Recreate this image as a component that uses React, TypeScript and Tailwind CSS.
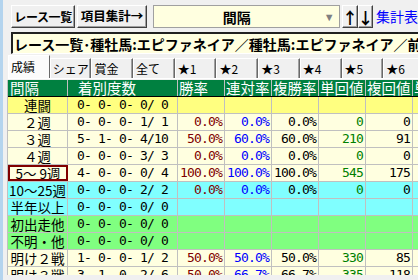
import React from 'react';

const jp = "font-['Noto_Sans_CJK_JP',sans-serif]";
const mono = "font-['DejaVu_Sans_Mono',monospace] text-[13px] tracking-[-0.83px] whitespace-pre";

type Row = {
  label: string;
  bg: string;
  rec: string;
  vals?: [string, string, string, string, string];
  sel?: boolean;
};

const rows: Row[] = [
  { label: '連闘', bg: 'bg-[#ffff80]', rec: '0- 0- 0- 0/ 0' },
  { label: '２週', bg: 'bg-[#ffffe0]', rec: '0- 0- 0- 1/ 1', vals: ['0.0%', '0.0%', '0.0%', '0', '0'] },
  { label: '３週', bg: 'bg-[#ffffe0]', rec: '5- 1- 0- 4/10', vals: ['50.0%', '60.0%', '60.0%', '210', '91'] },
  { label: '４週', bg: 'bg-[#ffffe0]', rec: '0- 0- 0- 3/ 3', vals: ['0.0%', '0.0%', '0.0%', '0', '0'] },
  { label: '5～ 9週', bg: 'bg-[#ffffe0]', rec: '4- 0- 0- 0/ 4', vals: ['100.0%', '100.0%', '100.0%', '545', '175'], sel: true },
  { label: '10～25週', bg: 'bg-[#80ffff]', rec: '0- 0- 0- 2/ 2', vals: ['0.0%', '0.0%', '0.0%', '0', '0'] },
  { label: '半年以上', bg: 'bg-[#80ffff]', rec: '0- 0- 0- 0/ 0' },
  { label: '初出走他', bg: 'bg-[#80ff80]', rec: '0- 0- 0- 0/ 0' },
  { label: '不明・他', bg: 'bg-[#80ff80]', rec: '0- 0- 0- 0/ 0' },
  { label: '明け２戦', bg: 'bg-[#ffffe0]', rec: '1- 0- 0- 1/ 2', vals: ['50.0%', '50.0%', '50.0%', '330', '85'] },
  { label: '明け３戦', bg: 'bg-[#ffffe0]', rec: '3- 1- 0- 2/ 6', vals: ['50.0%', '66.7%', '66.7%', '335', '118'] },
];

const valColors = ['text-[#800000]', 'text-[#0000ff]', 'text-black', 'text-[#008000]', 'text-black'];
const headers = ['勝率', '連対率', '複勝率', '単回値', '複回値'];
const tabs = ['成績', 'シェア', '賞金', '全て', '★1', '★2', '★3', '★4', '★5', '★6'];

const Button = ({ children, className = '' }: { children: React.ReactNode; className?: string }) => (
  <div
    className={`h-[23px] flex items-center justify-center whitespace-nowrap bg-[#f0f0f0] border border-t-white border-l-white border-b-[#404040] border-r-[#404040] shadow-[inset_-1px_-1px_0_#a0a0a0] font-bold leading-none ${jp} ${className}`}
  >
    {children}
  </div>
);

export default function App() {
  return (
    <div className="w-[418px] h-[280px] overflow-hidden flex bg-[#f0f0f0] text-black">
      <div className="w-[3px] shrink-0 bg-[#b4d4ee]" />
      <div className="flex-1 flex flex-col min-w-0">
        {/* toolbar */}
        <div className="h-[32px] pt-[5px] flex items-start shrink-0">
          <Button className="ml-[8px] w-[69px] text-[12px] tracking-[-0.4px]">レース一覧</Button>
          <Button className="ml-[2px] w-[75px] text-[12.5px]">項目集計→</Button>
          <div className="ml-[6px] w-[202px] h-[23px] flex items-center bg-[#ffffe0] border border-[#a0a0a0]">
            <span className={`w-[166px] text-center font-bold text-[14px] leading-none ${jp}`}>間隔</span>
            <span className="flex-1 pl-[4px] text-[#808080] text-[11px] leading-none">▼</span>
          </div>
          <Button className="ml-[2px] w-[16px] text-[16px]">↑</Button>
          <Button className="w-[15px] text-[16px]">↓</Button>
          <span className={`ml-[3px] mt-[4px] text-[14px] leading-none text-[#0000ff] whitespace-nowrap ${jp}`}>集計表</span>
        </div>

        {/* title */}
        <div className="h-[22px] ml-[8px] shrink-0 flex items-center bg-[#ffffe0] border-t-2 border-l-2 border-t-[#202020] border-l-[#202020] border-b border-b-white overflow-hidden">
          <span className={`pl-[1px] font-bold text-[14px] leading-none whitespace-nowrap ${jp}`}>
            レース一覧･種牡馬:エピファネイア／種牡馬:エピファネイア／前
          </span>
        </div>

        {/* tabs */}
        <div className="h-[24px] pl-[5px] flex items-end shrink-0 overflow-hidden">
          {tabs.map((t, i) => (
            <div
              key={t}
              className={`w-[41.7px] shrink-0 flex items-center pl-[2px] text-[12px] leading-none whitespace-nowrap border-t border-l border-t-white border-l-white border-r border-r-[#696969] ${jp} ${
                i === 0 ? 'h-[23px] bg-[#fbfbfb]' : 'h-[20px] bg-[#f0f0f0] shadow-[inset_-1px_0_0_#a0a0a0]'
              }`}
            >
              {t}
            </div>
          ))}
        </div>
        <div className="h-[2px] ml-[5px] border-t border-white shrink-0" />

        {/* table */}
        <div className="h-[195px] ml-[4px] overflow-hidden border-l border-[#c0c0c0]">
          <div className={`flex h-[17px] bg-[#008040] text-white text-[14.5px] leading-[16px] border-b border-black ${jp}`}>
            <div className="w-[60px] shrink-0 pl-[2px] border-r border-[#c0c0c0]">間隔</div>
            <div className="w-[110px] shrink-0 pl-[10px] border-r border-[#c0c0c0]">着別度数</div>
            {headers.map((h) => (
              <div key={h} className="w-[47px] shrink-0 pl-[1px] border-r border-[#c0c0c0] whitespace-nowrap">
                {h}
              </div>
            ))}
            <div className="flex-1 pl-[1px] whitespace-nowrap overflow-hidden">単</div>
          </div>
          {rows.map((r) => (
            <div key={r.label} className={`flex h-[17px] border-b border-[#c0c0c0] ${r.bg}`}>
              <div
                className={`w-[60px] shrink-0 text-center text-[13.5px] whitespace-nowrap overflow-hidden ${jp} ${
                  r.sel ? 'border-2 border-[#800000] leading-[13px]' : 'border-r border-[#c0c0c0] leading-[16px]'
                }`}
              >
                {r.label}
              </div>
              <div className={`w-[110px] shrink-0 text-center leading-[16px] border-r border-[#c0c0c0] ${mono}`}>{r.rec}</div>
              {[0, 1, 2, 3, 4].map((k) => (
                <div
                  key={k}
                  className={`w-[47px] shrink-0 text-right pr-[2px] leading-[16px] border-r border-[#c0c0c0] overflow-hidden ${mono} ${valColors[k]}`}
                >
                  {r.vals ? r.vals[k] : ''}
                </div>
              ))}
              <div className="flex-1" />
            </div>
          ))}
        </div>
        <div className="flex-1 bg-[#f0f0f0]" />
      </div>
    </div>
  );
}
